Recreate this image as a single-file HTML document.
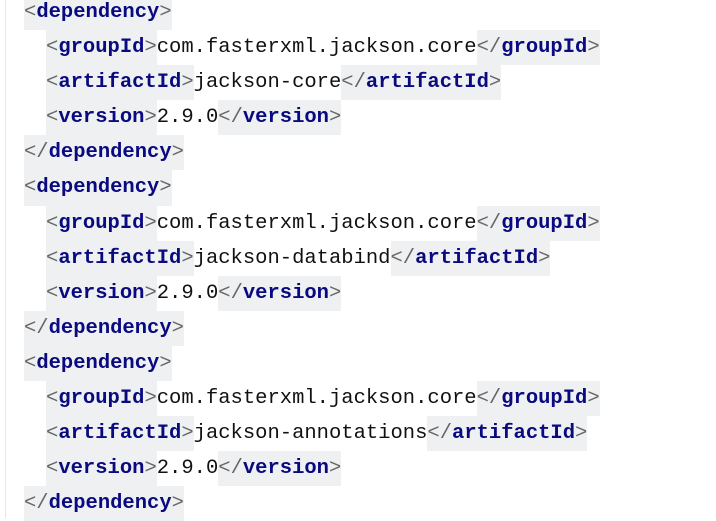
<!DOCTYPE html>
<html><head><style>
html,body{margin:0;padding:0;background:#fff;width:716px;height:518px;overflow:hidden}
.g{position:absolute;left:5px;top:0;width:1px;height:518px;background:#e6e6e6}
.c{position:absolute;left:24px;top:-5px;font-family:"Liberation Mono",monospace;font-size:20.5px;line-height:35.1px;color:#111}
.l{height:35.1px;white-space:pre}
.i{padding-left:22px}
.t{background:#eef0f2;color:#666;display:inline-block}
.t b{color:#0a0a80;font-weight:bold}
</style></head><body>
<div class="g"></div>
<div class="c"><div class="l"><span class="t">&lt;<b>dependency</b>&gt;</span></div><div class="l i"><span class="t">&lt;<b>groupId</b>&gt;</span>com.fasterxml.jackson.core<span class="t">&lt;/<b>groupId</b>&gt;</span></div><div class="l i"><span class="t">&lt;<b>artifactId</b>&gt;</span>jackson-core<span class="t">&lt;/<b>artifactId</b>&gt;</span></div><div class="l i"><span class="t">&lt;<b>version</b>&gt;</span>2.9.0<span class="t">&lt;/<b>version</b>&gt;</span></div><div class="l"><span class="t">&lt;/<b>dependency</b>&gt;</span></div><div class="l"><span class="t">&lt;<b>dependency</b>&gt;</span></div><div class="l i"><span class="t">&lt;<b>groupId</b>&gt;</span>com.fasterxml.jackson.core<span class="t">&lt;/<b>groupId</b>&gt;</span></div><div class="l i"><span class="t">&lt;<b>artifactId</b>&gt;</span>jackson-databind<span class="t">&lt;/<b>artifactId</b>&gt;</span></div><div class="l i"><span class="t">&lt;<b>version</b>&gt;</span>2.9.0<span class="t">&lt;/<b>version</b>&gt;</span></div><div class="l"><span class="t">&lt;/<b>dependency</b>&gt;</span></div><div class="l"><span class="t">&lt;<b>dependency</b>&gt;</span></div><div class="l i"><span class="t">&lt;<b>groupId</b>&gt;</span>com.fasterxml.jackson.core<span class="t">&lt;/<b>groupId</b>&gt;</span></div><div class="l i"><span class="t">&lt;<b>artifactId</b>&gt;</span>jackson-annotations<span class="t">&lt;/<b>artifactId</b>&gt;</span></div><div class="l i"><span class="t">&lt;<b>version</b>&gt;</span>2.9.0<span class="t">&lt;/<b>version</b>&gt;</span></div><div class="l"><span class="t">&lt;/<b>dependency</b>&gt;</span></div></div>
</body></html>
